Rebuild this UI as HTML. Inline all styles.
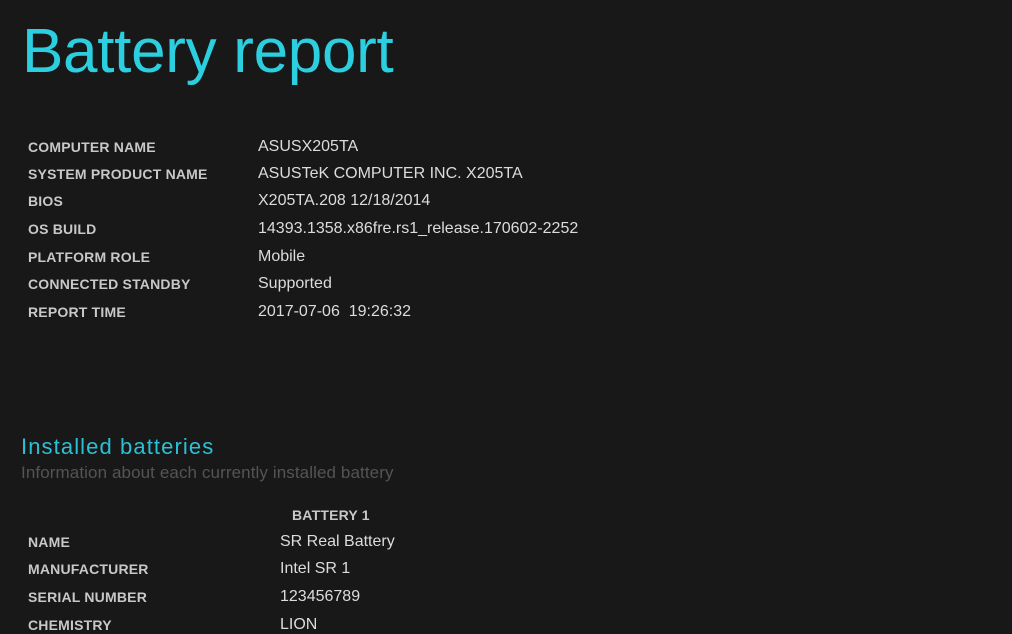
<!DOCTYPE html>
<html><head><meta charset="utf-8"><style>
body{margin:0;width:1012px;height:632px;overflow:hidden;background:#181818;font-family:"Liberation Sans",sans-serif;position:relative}
.a{position:absolute;white-space:nowrap}
.t{left:22px;top:16px;font-size:62px;color:#2ccfe0;letter-spacing:-0.3px}
.l{font-size:14px;font-weight:bold;color:#c8c8c8;line-height:16px;letter-spacing:0.2px}
.v{font-size:16px;color:#dcdcdc;line-height:18px}
.h{left:21px;top:434px;font-size:22px;color:#2cc0d4;letter-spacing:1.1px}
.s{left:21px;top:463px;font-size:17px;color:#545454;letter-spacing:0.1px}
</style></head><body>
<div class="a t">Battery report</div>
<div class="a l" style="left:28px;top:139px">COMPUTER NAME</div><div class="a v" style="left:258px;top:138px">ASUSX205TA</div>
<div class="a l" style="left:28px;top:166px">SYSTEM PRODUCT NAME</div><div class="a v" style="left:258px;top:165px">ASUSTeK COMPUTER INC. X205TA</div>
<div class="a l" style="left:28px;top:193px">BIOS</div><div class="a v" style="left:258px;top:192px">X205TA.208 12/18/2014</div>
<div class="a l" style="left:28px;top:221px">OS BUILD</div><div class="a v" style="left:258px;top:220px">14393.1358.x86fre.rs1_release.170602-2252</div>
<div class="a l" style="left:28px;top:249px">PLATFORM ROLE</div><div class="a v" style="left:258px;top:248px">Mobile</div>
<div class="a l" style="left:28px;top:276px">CONNECTED STANDBY</div><div class="a v" style="left:258px;top:275px">Supported</div>
<div class="a l" style="left:28px;top:304px">REPORT TIME</div><div class="a v" style="left:258px;top:303px">2017-07-06&nbsp;&nbsp;19:26:32</div>
<div class="a h">Installed batteries</div>
<div class="a s">Information about each currently installed battery</div>
<div class="a l" style="left:292px;top:507px">BATTERY 1</div>
<div class="a l" style="left:28px;top:534px">NAME</div><div class="a v" style="left:280px;top:533px">SR Real Battery</div>
<div class="a l" style="left:28px;top:561px">MANUFACTURER</div><div class="a v" style="left:280px;top:560px">Intel SR 1</div>
<div class="a l" style="left:28px;top:589px">SERIAL NUMBER</div><div class="a v" style="left:280px;top:588px">123456789</div>
<div class="a l" style="left:28px;top:617px">CHEMISTRY</div><div class="a v" style="left:280px;top:616px">LION</div>
</body></html>
